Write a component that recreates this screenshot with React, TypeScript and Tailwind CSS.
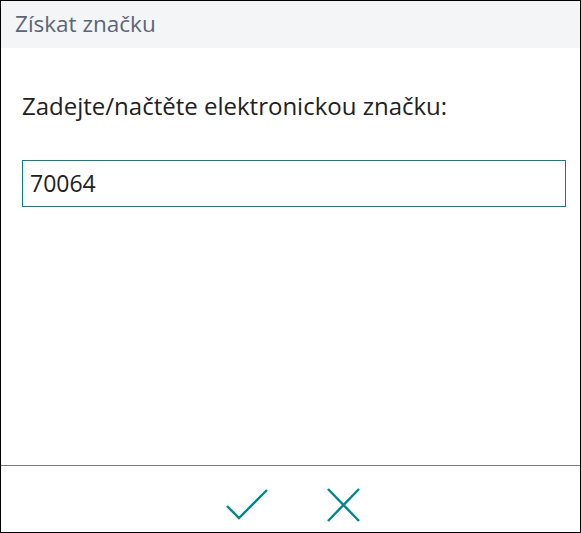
export default function App() {
  return (
    <div className="w-[581px] h-[533px] border border-black bg-white flex flex-col" style={{ fontFamily: '"Segoe UI", "Open Sans", "Noto Sans", sans-serif' }}>
      <div className="h-[47px] bg-[#f4f5f7] flex items-center pl-[14px] shrink-0">
        <span className="text-[22.5px] text-[#5b6577] leading-none">Získat značku</span>
      </div>
      <div className="flex-1 pl-[21px] pr-[14px] pt-[46px]">
        <div className="text-[24px] text-[#212121] leading-none">Zadejte/načtěte elektronickou značku:</div>
        <div className="mt-[42px] h-[47px] border border-[#008489] flex items-center pl-[7px] text-[23px] text-[#212121]">70064</div>
      </div>
      <div className="h-[67px] border-t border-[#7a7a7a] flex justify-center items-start pt-[22px] gap-[58px] shrink-0 pl-[3px]">
        <svg width="44" height="34" viewBox="0 0 44 34">
          <path d="M2 18 L14 30 L42 2" fill="none" stroke="#00868b" strokeWidth="2.4" />
        </svg>
        <svg width="33" height="34" viewBox="0 0 33 34">
          <path d="M1 1 L32 33 M32 1 L1 33" fill="none" stroke="#00868b" strokeWidth="2.4" />
        </svg>
      </div>
    </div>
  );
}
